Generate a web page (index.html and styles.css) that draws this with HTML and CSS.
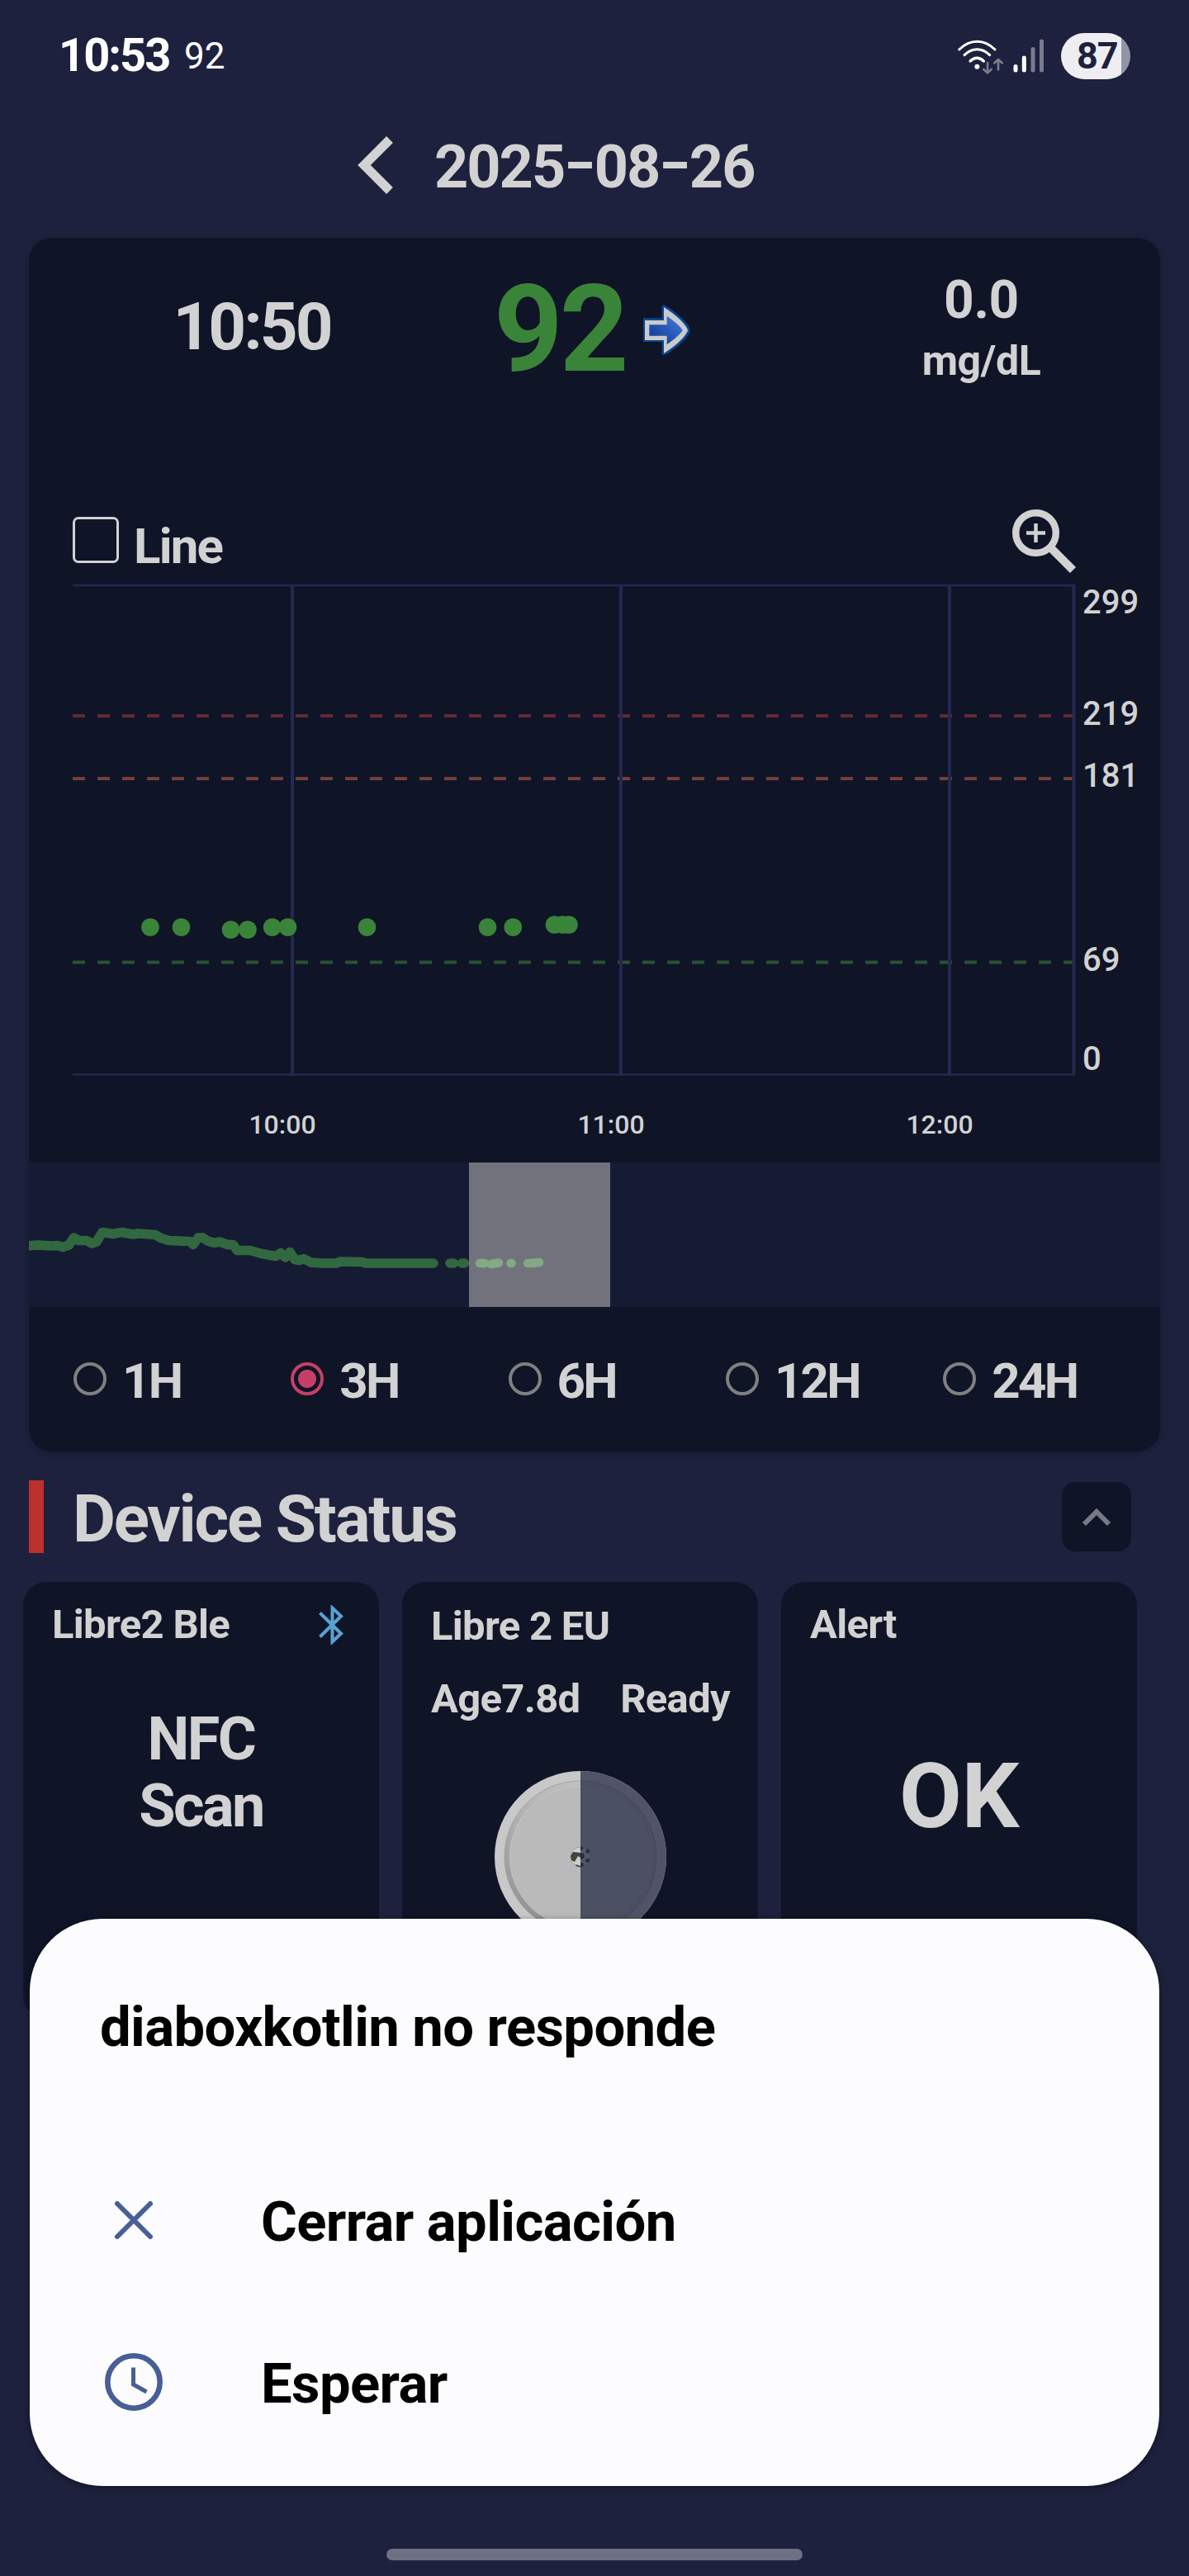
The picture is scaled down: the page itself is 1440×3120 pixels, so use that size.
FILE: index.html
```html
<!DOCTYPE html>
<html lang="es">
<head>
    <meta charset="UTF-8">
    <meta name="viewport" content="width=device-width, initial-scale=1.0">
    <title>Diabox</title>
    <link rel="stylesheet" href="styles.css">
</head>
<body>
    <!-- Status bar -->
    <div class="status-bar">
        <span class="clock">10:53</span>
        <span class="notif">92</span>
        <svg class="wifi" width="60" height="48" viewBox="50 40 180 144" fill="none" stroke-linecap="round">
            <g stroke="#fff" stroke-width="9">
                <path d="M64 85 Q94 56 129 56 Q164 56 194 85"/>
                <path d="M83 105 Q104 84 129 84 Q154 84 175 105"/>
                <path d="M104 127 Q129 105 153 127" stroke-width="10"/>
            </g>
            <circle cx="129" cy="147" r="9" fill="#fff"/>
            <path d="M167 133v36M153 157l14 13 14-13M206 158v-36M192 134l14-13 14 13" stroke="#7a7b8d" stroke-width="8" stroke-linejoin="round"/>
        </svg>
        <svg class="signal" width="38" height="42" viewBox="0 0 38 42" stroke-width="5" stroke-linecap="round">
            <path d="M3 33.5V38M13.3 23V38" stroke="#fff"/>
            <path d="M24 12.500V38M34.500 3V38" stroke="#7a7b8d"/>
        </svg>
        <span class="battery">87</span>
    </div>

    <!-- Date -->
    <div class="date-bar">
        <svg width="44" height="72" viewBox="0 0 44 72" fill="none" stroke="#d2d2d2" stroke-width="11">
            <path d="M39 5L8 36L39 67"/>
        </svg>
        <h1>2025<span class="dash">-</span>08<span class="dash">-</span>26</h1>
    </div>

    <!-- Glucose card -->
    <div class="glucose-card">
        <div class="reading">
            <div class="reading-time">10:50</div>
            <div class="reading-value">
                <span class="value">92</span>
                <svg width="60" height="64" viewBox="0 0 180 192">
                    <defs>
                        <linearGradient id="arrowFill" x1="0" y1="1" x2="1" y2="0">
                            <stop offset="0" stop-color="#0a2f8a"/>
                            <stop offset="1" stop-color="#4580e0"/>
                        </linearGradient>
                    </defs>
                    <path d="M6 52H74V6Q80 2 96 12Q150 48 171 80Q180 96 171 112Q150 144 96 180Q80 190 74 184V138H6Z" fill="#0b4590"/>
                    <path d="M12 60H81V12Q146 54 166 90Q170 96 166 102Q146 138 81 180V132H12Z" fill="#c9cacd"/>
                    <path d="M28 76H92V44Q142 80 149 96Q142 112 92 148V116H28Z" fill="url(#arrowFill)"/>
                </svg>
            </div>
            <div class="reading-delta">
                <div class="delta">0.0</div>
                <div class="unit">mg/dL</div>
            </div>
        </div>

        <div class="chart-tools">
            <label class="line-toggle"><span class="checkbox"></span>Line</label>
            <svg width="80" height="80" viewBox="0 0 80 80" fill="none" stroke="#d2d2d2">
                <circle cx="30.500" cy="30.500" r="24.300" stroke-width="8.500"/>
                <path d="M19 30.500H42M30.500 19V42" stroke-width="4.500"/>
                <path d="M49 49L75.500 75.500" stroke-width="10"/>
            </svg>
        </div>

        <svg class="chart" width="1370" height="704" viewBox="35 704 1370 704">
            <g fill="none" stroke-width="4" stroke-dasharray="15 15">
                <path d="M88 867H1300" stroke="#622a34"/>
                <path d="M88 943H1300" stroke="#724038"/>
                <path d="M88 1165.500H1300" stroke="#2a5232"/>
            </g>
            <path d="M88 709H1302M88 1301.500H1302" stroke="#252850" stroke-width="2.500"/>
            <path d="M354 709V1301M752 709V1301M1150 709V1301M1300.500 709V1301" stroke="#252850" stroke-width="4"/>
            <g fill="#3a8439">
                <circle cx="182" cy="1123" r="10.800"/>
                <circle cx="219.500" cy="1123" r="10.800"/>
                <circle cx="279.500" cy="1126" r="10.800"/>
                <circle cx="300" cy="1126" r="10.800"/>
                <circle cx="329.700" cy="1123" r="10.800"/>
                <circle cx="348.500" cy="1123" r="10.800"/>
                <circle cx="444.500" cy="1123" r="10.800"/>
                <circle cx="590.500" cy="1123" r="10.800"/>
                <circle cx="621.300" cy="1123" r="10.800"/>
                <circle cx="671.500" cy="1120" r="10.800"/>
                <circle cx="681.500" cy="1120" r="10.800"/>
                <circle cx="689" cy="1120" r="10.800"/>
            </g>
            <g class="y-labels">
                <text x="1311" y="743">299</text>
                <text x="1311" y="878">219</text>
                <text x="1311" y="953">181</text>
                <text x="1311" y="1176">69</text>
                <text x="1311" y="1296">0</text>
            </g>
            <g class="x-labels">
                <text x="342" y="1373">10:00</text>
                <text x="740" y="1373">11:00</text>
                <text x="1138" y="1373">12:00</text>
            </g>
        </svg>

        <!-- Day overview with the visible window -->
        <svg class="overview" width="1370" height="175" viewBox="0 0 1370 175">
            <g fill="none" stroke-width="11.500" stroke-linecap="round" stroke-linejoin="round">
                <path d="M0 100.700L11 100L27 101L35 100.500L41 102.500L48.500 100L54.500 91L60.500 94.500L69.500 94.500L76.500 98L82 96L89 84.500L102 86.500L112 84.500L125.500 87L132.500 86L153 87.500L160 91.500L169.500 94.500L194.500 95.500L199 99.500L205 91L210.500 91L216.500 95L224.500 97.500L231 96L240.500 99.500L247.500 99.500L252 106.500L268 106.500L282 110.500L299 113.500L305 109.500L310.500 115L316 108.500L322 117.500L327.500 118.500L333 116.500L341.500 121L355 122L372.500 122L377 120L403.500 120.500L408 122L490 122M510 122h4.500M524.500 122h3" stroke="#32683f"/>
                <path d="M546 122h6M560 123L569 121.500M583.500 122h1M604 122h6L618 121" stroke="#387f42" stroke-width="10.500"/>
            </g>
            <rect x="533" width="171" height="175" fill="#e2ded8" opacity=".45"/>
        </svg>

        <div class="ranges">
            <label><span class="radio"></span>1H</label>
            <label><span class="radio checked"></span>3H</label>
            <label><span class="radio"></span>6H</label>
            <label><span class="radio"></span>12H</label>
            <label><span class="radio"></span>24H</label>
        </div>
    </div>

    <!-- Device status -->
    <div class="section-title">
        <h2>Device Status</h2>
        <button class="collapse">
            <svg width="36" height="26" viewBox="0 0 36 26" fill="none" stroke="#777a85" stroke-width="6">
                <path d="M3 22L18 7L33 22"/>
            </svg>
        </button>
    </div>

    <div class="devices">
        <div class="device">
            <div class="device-head">
                <span>Libre2 Ble</span>
                <svg width="30" height="48" viewBox="0 0 30 48" fill="none" stroke="#58a2d2" stroke-width="4">
                    <path d="M1.500 9.500L27 34.500L16.500 44.500V3.500L27 13.500L1.500 38.500"/>
                </svg>
            </div>
            <div class="nfc">NFC<br>Scan</div>
        </div>
        <div class="device">
            <div class="device-head sensor-name"><span>Libre 2 EU</span></div>
            <div class="device-head sensor-info"><span>Age7.8d</span><span>Ready</span></div>
            <svg class="sensor" width="208" height="208" viewBox="0 0 208 208">
                <defs>
                    <linearGradient id="rim" x1=".2" y1="1" x2=".5" y2="0">
                        <stop offset="0" stop-color="#8e8e8e"/>
                        <stop offset=".4" stop-color="#a4a4a4"/>
                        <stop offset="1" stop-color="#c0c0c0"/>
                    </linearGradient>
                    <clipPath id="half"><rect x="104" width="104" height="208"/></clipPath>
                </defs>
                <circle cx="104" cy="104" r="104" fill="#c8c8c8"/>
                <circle cx="104" cy="104" r="92" fill="url(#rim)" stroke="#999" stroke-width=".8"/>
                <circle cx="104" cy="104" r="85.500" fill="#bababa" stroke="#c9c9c9" stroke-width=".8"/>
                <circle cx="104" cy="104" r="12" fill="#cecece" stroke="#a0a0a0"/>
                <path d="M95 98l9 1v6l-3-2-4 7-4-2-1-5Z" fill="#4a4236"/>
                <path d="M98 113l6 2v1.500l-5-1Z" fill="#4a4236"/>
                <g clip-path="url(#half)">
                    <circle cx="104" cy="104" r="104" fill="#515467"/>
                    <circle cx="104" cy="104" r="92" fill="#4b4d62" stroke="#42445a" stroke-width=".8"/>
                    <circle cx="104" cy="104" r="85.500" fill="#4b5063" stroke="#50546a" stroke-width=".8"/>
                    <circle cx="104" cy="104" r="12" fill="#54576c" stroke="#45475c"/>
                    <path d="M103 99l5 1 1 4-3 3h-3ZM104 92h3v3l-3 1ZM110 97l4-3 1 4-3 2ZM110 107l5-1-1 5-4-1ZM104 111l4 1-1 4h-3Z" fill="#272a42"/>
                </g>
            </svg>
        </div>
        <div class="device">
            <div class="device-head"><span>Alert</span></div>
            <div class="alert-value">OK</div>
        </div>
    </div>

    <!-- "Not responding" dialog -->
    <div class="dialog">
        <h3>diaboxkotlin no responde</h3>
        <div class="dialog-item">
            <svg width="70" height="70" viewBox="0 0 70 70" fill="none" stroke="#475f96" stroke-width="6" stroke-linecap="round">
                <path d="M15 15L55 55M55 15L15 55"/>
            </svg>
            <span>Cerrar aplicación</span>
        </div>
        <div class="dialog-item">
            <svg width="70" height="70" viewBox="0 0 70 70" fill="none" stroke="#475f96">
                <circle cx="35" cy="35" r="31.700" stroke-width="6.600"/>
                <path d="M34.500 17.500V38L50.500 47" stroke-width="5"/>
            </svg>
            <span>Esperar</span>
        </div>
    </div>

    <div class="home-indicator"></div>
</body>
</html>
```

FILE: styles.css
```css
* {
    box-sizing: border-box;
}

body {
    margin: 0;
    width: 1440px;
    height: 3120px;
    overflow: hidden;
    position: relative;
    background-color: #1e213d;
    color: #d2d2d2;
    font-family: Roboto, sans-serif;
    font-weight: 700;
    letter-spacing: -0.4px;
}

svg {
    display: block;
    flex: none;
}

h1, h2, h3 {
    margin: 0;
    font-weight: 700;
}

/* Status bar */
.status-bar {
    display: flex;
    align-items: center;
    height: 136px;
    padding: 0 71px 0 71px;
    color: #fff;
}

.clock {
    width: 152px;
    font-size: 56px;
    line-height: 60px;
    letter-spacing: -2px;
    margin-top: -2px;
}

.notif {
    flex: 1;
    font-size: 44px;
    line-height: 60px;
    font-weight: 400;
    letter-spacing: 0;
    margin-top: -1px;
}

.wifi {
    margin: 2px 10px 0 0;
}

.signal {
    margin: 0 20px 0 0;
}

.battery {
    width: 84px;
    height: 56px;
    border-radius: 28px;
    background: linear-gradient(to right, #eeeef2 73px, #9395a5 73px);
    color: #1e213d;
    font-size: 45px;
    line-height: 56px;
    padding-left: 19px;
    letter-spacing: -1px;
}

/* Date */
.date-bar {
    display: flex;
    align-items: center;
    height: 128px;
    padding-left: 433px;
    margin-bottom: 24px;
}

.date-bar h1 {
    margin: 5px 0 0 49px;
    font-size: 72px;
    line-height: 80px;
    letter-spacing: -2px;
}

.dash {
    display: inline-block;
    width: 36.500px;
    text-align: center;
    transform: translateY(-5px) scaleX(1.45);
}

/* Glucose card */
.glucose-card {
    width: 1370px;
    height: 1470px;
    margin-left: 35px;
    border-radius: 28px;
    background-color: #0f1427;
    box-shadow: 0 2px 8px rgba(0, 0, 0, 0.25);
}

.reading {
    display: grid;
    grid-template-columns: 540px 305px 1fr;
    height: 327px;
    padding-top: 40px;
}

.reading-time {
    text-align: center;
    font-size: 80px;
    line-height: 136px;
    letter-spacing: -3px;
}

.reading-value {
    display: flex;
    height: 146px;
    align-items: center;
    padding-left: 23px;
}

.value {
    width: 179px;
    color: #3a8439;
    font-size: 146px;
    line-height: 140px;
    letter-spacing: -4px;
    margin-top: -2px;
}

.reading-value svg {
    margin-top: -2px;
}

.reading-delta {
    text-align: center;
    padding: 0 0 0 92px;
}

.delta {
    font-size: 64px;
    line-height: 72px;
}

.unit {
    font-size: 50px;
    line-height: 75px;
}

/* Chart */
.chart-tools {
    display: flex;
    justify-content: space-between;
    height: 89px;
    padding: 0 101px 0 53px;
}

.line-toggle {
    display: flex;
    padding-top: 11px;
    font-size: 60px;
    line-height: 71px;
    letter-spacing: -1.8px;
}

.checkbox {
    width: 56px;
    height: 56px;
    margin-right: 18px;
    border: 3.5px solid #d2d2d2;
    border-radius: 7px;
}

.y-labels {
    fill: #d2d2d2;
    font-size: 40px;
    font-weight: 500;
    letter-spacing: 0;
}

.x-labels {
    fill: #d2d2d2;
    font-size: 32px;
    font-weight: 500;
    letter-spacing: 0;
    text-anchor: middle;
}

.overview {
    background-color: #161b34;
}

/* Range selector */
.ranges {
    display: flex;
    padding: 50px 0 0 54px;
}

.ranges label {
    display: flex;
    align-items: center;
    width: 263.300px;
    flex: none;
    font-size: 60px;
    line-height: 80px;
    letter-spacing: -2.7px;
}

.radio {
    width: 40px;
    height: 40px;
    margin: -6px 19px 0 0;
    border: 4px solid #808080;
    border-radius: 50%;
}

.radio.checked {
    border-color: #c63f65;
    background: radial-gradient(circle, #c63f65 10.5px, transparent 11.5px);
}

/* Device status */
.section-title {
    display: flex;
    justify-content: space-between;
    margin: 35px 70px 35px 35px;
    height: 88px;
    border-left: 18px solid #bd302c;
    padding-left: 35px;
}

.section-title h2 {
    font-size: 80px;
    line-height: 94px;
    letter-spacing: -2.2px;
}

.collapse {
    display: flex;
    align-items: center;
    justify-content: center;
    width: 84px;
    height: 84px;
    margin-top: 2px;
    padding: 0;
    border: none;
    border-radius: 16px;
    background-color: #0f1427;
}

.devices {
    display: flex;
    gap: 28px;
    padding-left: 28px;
}

.device {
    width: 431px;
    height: 529px;
    border-radius: 28px;
    background-color: #0f1427;
}

.device-head {
    display: flex;
    align-items: center;
    justify-content: space-between;
    padding: 23px 43px 0 35px;
    font-size: 49px;
    line-height: 58px;
    letter-spacing: -0.7px;
}

.sensor-name {
    padding-top: 25px;
}

.sensor-info {
    padding-top: 30px;
    padding-right: 34px;
}

.nfc {
    padding-top: 69px;
    text-align: center;
    font-size: 72px;
    line-height: 81px;
    letter-spacing: -2.5px;
}

.sensor {
    margin: 58px auto 0;
}

.alert-value {
    padding-top: 114px;
    text-align: center;
    font-size: 110px;
    line-height: 130px;
}

/* Dialog */
.dialog {
    position: absolute;
    left: 36px;
    top: 2324px;
    width: 1368px;
    height: 687px;
    padding: 91px 86px 0 85px;
    border-radius: 88px;
    background-color: #fcfcff;
    box-shadow: 0 2px 8px rgba(0, 0, 0, 0.4);
    color: #000;
    font-size: 67px;
    letter-spacing: -0.6px;
}

.dialog h3 {
    margin-bottom: 136px;
    font-size: 67px;
    line-height: 80px;
}

.dialog-item {
    display: flex;
    align-items: center;
    gap: 119px;
    height: 116px;
    margin-bottom: 80px;
}

.dialog-item svg {
    margin-left: 6px;
}

.dialog-item span {
    padding-top: 4px;
}

/* Gesture bar */
.home-indicator {
    position: absolute;
    left: 468px;
    top: 3087px;
    width: 504px;
    height: 14px;
    border-radius: 7px;
    background-color: #6e7083;
}
```
